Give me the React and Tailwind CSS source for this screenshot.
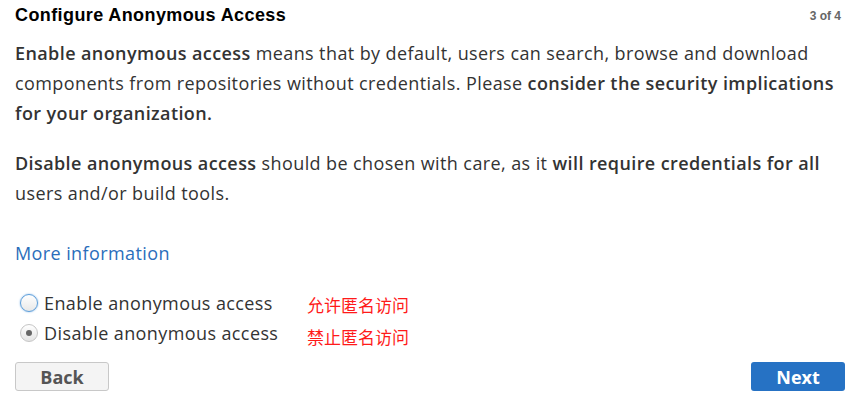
export default function App() {
  return (
    <div className="w-[849px] h-[400px] bg-white text-[#333] overflow-hidden" style={{ fontFamily: '"Open Sans", "Noto Sans CJK SC", sans-serif' }}>
      <div className="flex items-center justify-between pl-[15px] pr-[8px] pt-[3px] h-[28px]">
        <h1 className="text-[18px] font-bold text-black tracking-[0.4px]" style={{ fontFamily: '"Liberation Sans", sans-serif' }}>Configure Anonymous Access</h1>
        <span className="text-[12px] font-bold text-[#666]" style={{ fontFamily: '"Liberation Sans", sans-serif' }}>3 of 4</span>
      </div>
      <div className="pl-[15px] pr-[4px] pt-[10px] text-[18px] leading-[30px] tracking-[0.4px]">
        <p className="pr-[10px]">
          <b className="font-semibold">Enable anonymous access</b> means that by default, users can search, browse and download components from repositories without credentials. Please <b className="font-semibold">consider the security implications for your organization.</b>
        </p>
        <p className="mt-[20px] pr-[10px]">
          <b className="font-semibold">Disable anonymous access</b> should be chosen with care, as it <b className="font-semibold">will require credentials for all</b> users and/or build tools.
        </p>
        <p className="mt-[30px]">
          <a className="text-[#2a6ebb]">More information</a>
        </p>
        <div className="mt-[20px] flex">
          <div className="flex flex-col w-[292px]">
            <label className="flex items-center gap-[6px] h-[30px] pl-[5px]">
              <span className="w-[18px] h-[18px] rounded-full border border-[#5b9dd9] bg-gradient-to-b from-white to-[#e8e8e8] shadow-[0_0_2px_#7fb2e6]"></span>
              <span>Enable anonymous access</span>
            </label>
            <label className="flex items-center gap-[6px] h-[30px] pl-[5px]">
              <span className="w-[18px] h-[18px] rounded-full border border-[#c5c5c5] bg-gradient-to-b from-white to-[#e4e4e4] flex items-center justify-center">
                <span className="w-[6px] h-[6px] rounded-full bg-[#666]"></span>
              </span>
              <span>Disable anonymous access</span>
            </label>
          </div>
          <div className="flex flex-col text-[#ff1a1a] text-[17px] tracking-normal" style={{ fontFamily: '"Noto Sans CJK SC", sans-serif' }}>
            <span className="h-[30px] leading-[34px]">允许匿名访问</span>
            <span className="h-[30px] leading-[38px]">禁止匿名访问</span>
          </div>
        </div>
        <div className="mt-[14px] flex justify-between">
          <button className="w-[94px] h-[29px] rounded-[3px] border border-[#c8c8c8] bg-[#f4f4f4] text-[#555] font-bold text-[18px] leading-none tracking-normal">Back</button>
          <button className="w-[94px] h-[29px] rounded-[3px] bg-[#2672c4] text-white font-bold text-[18px] leading-none tracking-normal">Next</button>
        </div>
      </div>
    </div>
  );
}
